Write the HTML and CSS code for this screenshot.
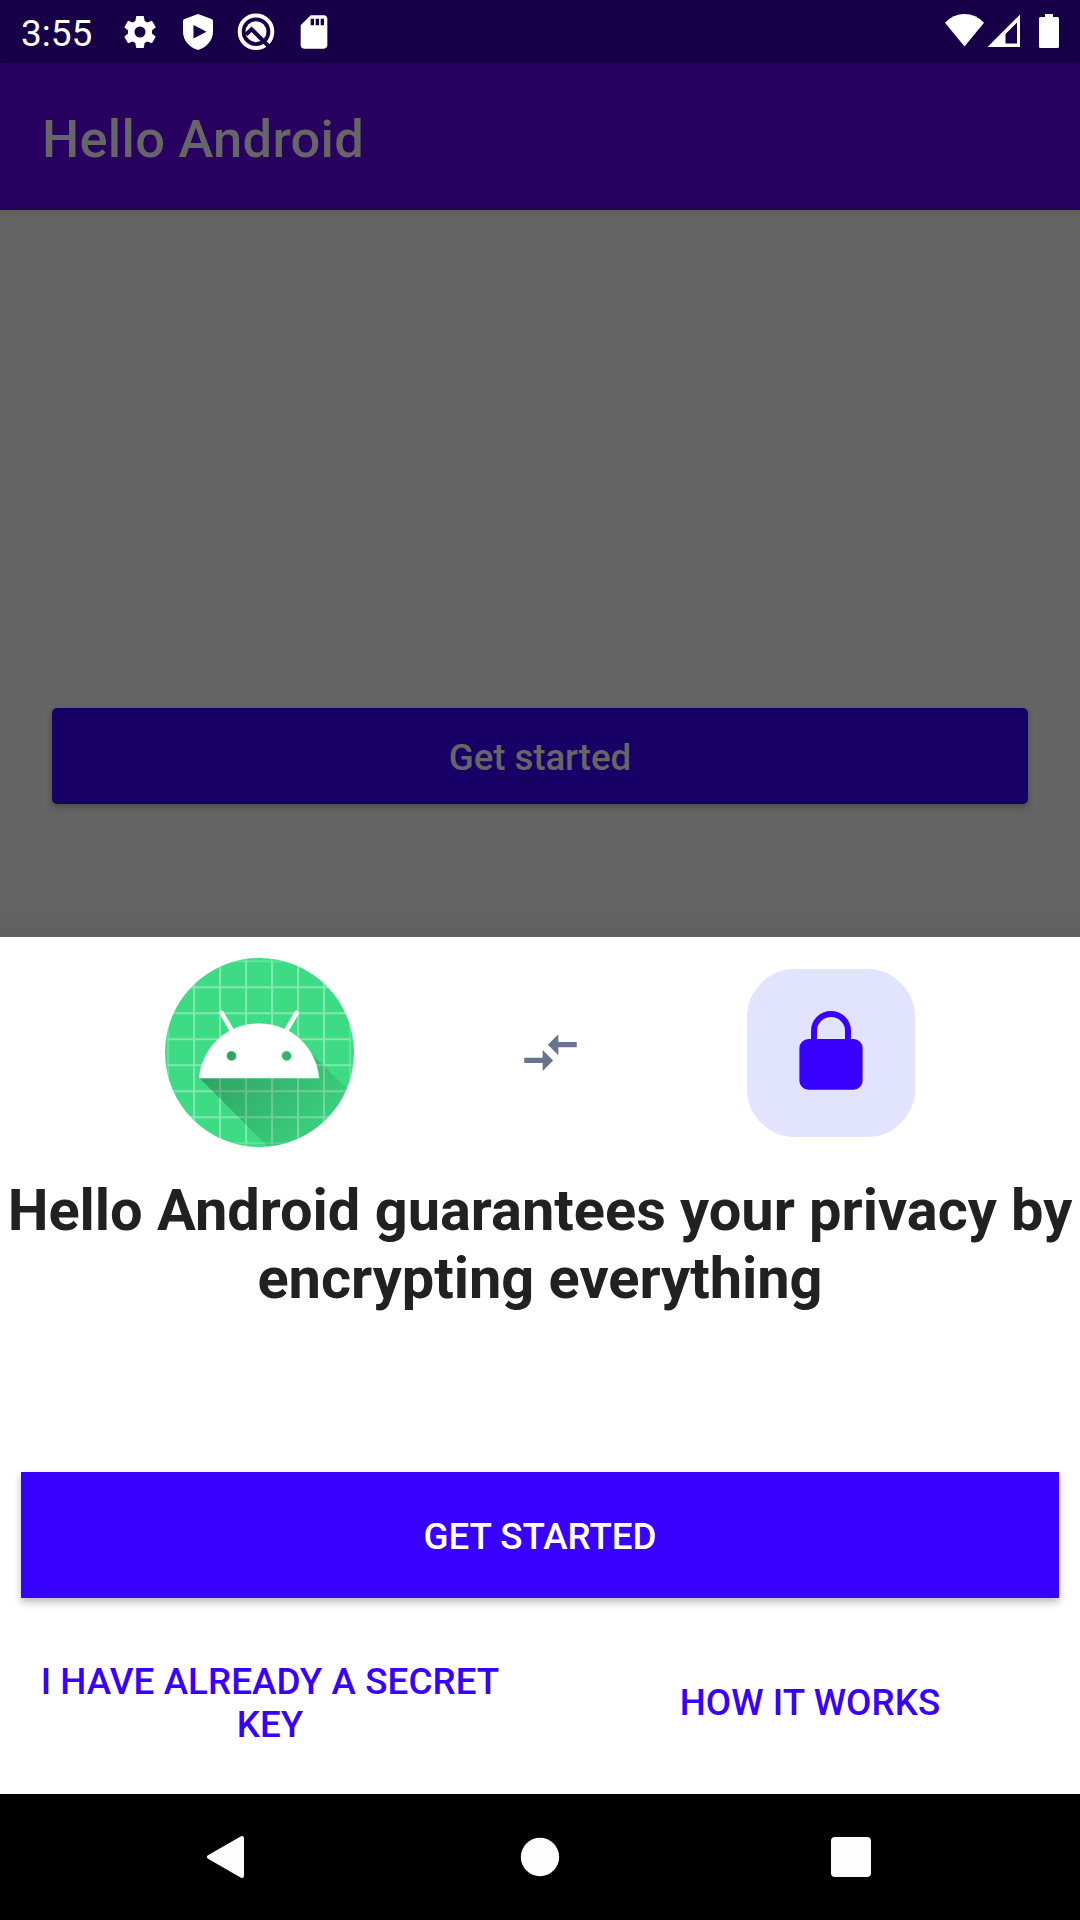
FILE: index.html
```html
<!DOCTYPE html>
<html lang="en">
<head>
<meta charset="utf-8">
<title>Hello Android</title>
<link rel="stylesheet" href="styles.css">
</head>
<body>
<div class="screen">
  <header class="status">
    <span class="time">3:55</span>
    <div class="notifications">
      <svg width="40" height="40" viewBox="0 0 24 24"><path d="M19.14 12.94c.04-.3.06-.61.06-.94 0-.32-.02-.64-.07-.94l2.03-1.58c.18-.14.23-.41.12-.61l-1.92-3.32c-.12-.22-.37-.29-.59-.22l-2.39.96c-.5-.38-1.03-.7-1.62-.94L14.4 2.81c-.04-.24-.24-.41-.48-.41h-3.84c-.24 0-.43.17-.47.41l-.36 2.54c-.59.24-1.13.57-1.62.94l-2.39-.96c-.22-.08-.47 0-.59.22L2.74 8.87c-.12.21-.08.47.12.61l2.03 1.58c-.05.3-.09.63-.09.94s.02.64.07.94l-2.03 1.58c-.18.14-.23.41-.12.61l1.92 3.32c.12.22.37.29.59.22l2.39-.96c.5.38 1.03.7 1.62.94l.36 2.54c.05.24.24.41.48.41h3.84c.24 0 .44-.17.47-.41l.36-2.54c.59-.24 1.13-.56 1.62-.94l2.39.96c.22.08.47 0 .59-.22l1.92-3.32c.12-.22.07-.47-.12-.61l-2.01-1.58zM12 15.3a3.3 3.3 0 1 1 0-6.6 3.3 3.3 0 0 1 0 6.6z"/></svg>
      <svg width="40" height="40" viewBox="0 0 40 40"><path fill-rule="evenodd" d="M20 2 33.500 7Q35 7.600 35 9V19.500C35 28 29 35.500 20 38 11 35.500 5 28 5 19.500V9Q5 7.600 6.500 7ZM15.500 13V26.500L28.500 19.700Z"/></svg>
      <svg width="40" height="40" viewBox="0 0 40 40"><circle class="ring" cx="20" cy="19.700" r="16.300"/><circle cx="20" cy="19.700" r="10.500"/><path class="cut" d="M10 22.500 15.500 17.200 33 34.500"/></svg>
      <svg width="40" height="40" viewBox="0 0 24 24"><path d="M18 2h-8L4.020 8 4 20c0 1.100.9 2 2 2h12c1.100 0 2-.9 2-2V4c0-1.100-.9-2-2-2zm-6 6h-2V4h2v4zm3 0h-2V4h2v4zm3 0h-2V4h2v4z"/></svg>
    </div>
    <svg class="system" width="116" height="40" viewBox="944 12 116 40"><path d="M964.500 46.500 945 22.800Q953 14 964.500 14T984 22.800Z"/><path fill-rule="evenodd" d="M1020 14.500V47H987.500ZM1017 22.500 1005.500 34V43.500H1017Z"/><path d="M1045 14h8v3h4.500q1.500 0 1.500 1.500v28q0 1.500-1.500 1.500h-17q-1.500 0-1.500-1.500v-28q0-1.500 1.500-1.500h4.500z"/></svg>
  </header>
  <div class="appbar">Hello Android</div>
  <main class="content"><div class="start">Get started</div></main>
  <section class="sheet">
    <div class="icons">
      <svg class="launcher" width="189" height="189" viewBox="17.800 17.750 72.700 72.700">
        <defs>
          <clipPath id="disc"><circle cx="54.150" cy="54.100" r="36.350"/></clipPath>
          <linearGradient id="shade" gradientUnits="userSpaceOnUse" x1="42.949" y1="49.598" x2="85.848" y2="92.496"><stop offset="0" stop-color="#000" stop-opacity=".267"/><stop offset="1" stop-color="#000" stop-opacity="0"/></linearGradient>
        </defs>
        <g clip-path="url(#disc)">
          <path fill="#3ddc84" d="M0 0h108v108H0z"/>
          <path class="grid" d="M19 0v108M29 0v108M39 0v108M49 0v108M59 0v108M69 0v108M79 0v108M89 0v108M0 19h108M0 29h108M0 39h108M0 49h108M0 59h108M0 69h108M0 79h108M0 89h108"/>
          <path class="grid" d="M29 19v70M39 19v70M49 19v70M59 19v70M69 19v70M79 19v70M19 29h70M19 39h70M19 49h70M19 59h70M19 69h70M19 79h70"/>
          <path fill="url(#shade)" d="M31 63.928s6.400-11 12.100-13.100c7.200-2.600 26-1.400 26-1.400l38.100 38.100-.2 21.400-32-1z"/>
          <path fill="#fff" stroke="#fff" stroke-width=".2" d="M65.300 45.828l3.800-6.600c.2-.4.1-.9-.3-1.100-.4-.2-.9-.1-1.100.3l-3.900 6.700c-6.300-2.800-13.400-2.800-19.700 0l-3.900-6.700c-.2-.4-.7-.5-1.100-.3-.3.200-.4.700-.2 1.100l3.800 6.600C36.200 49.428 31.700 56.028 31 63.928h46c-.7-7.900-5.200-14.500-11.700-18.100zM43.400 57.328c-.8 0-1.500-.5-1.800-1.200-.3-.7-.1-1.500.4-2.100.5-.5 1.400-.7 2.100-.4.700.3 1.200 1 1.200 1.800 0 1.100-.8 1.900-1.900 1.900zM64.600 57.328c-.8 0-1.500-.5-1.800-1.200s-.1-1.500.4-2.100c.5-.5 1.400-.7 2.100-.4.7.3 1.200 1 1.200 1.800 0 1.100-.9 1.900-1.900 1.900z"/>
        </g>
      </svg>
      <svg class="arrows" width="63" height="63" viewBox="0 0 24 24"><path d="M9.010 14H2v2h7.010v3L13 15l-3.990-4v3zm5.980-1v-3H22V8h-7.010V5L11 9l3.990 4z"/></svg>
      <svg class="lock" width="168" height="168" viewBox="0 0 168 168"><path fill="#e1e3ff" d="M47 0H121C146 0 168 22 168 47V121C168 146 146 168 121 168H47C22 168 0 146 0 121V47C0 22 22 0 47 0Z"/><rect x="52.400" y="70" width="63.200" height="50.700" rx="9" fill="#3700ff"/><path fill="none" stroke="#3700ff" stroke-width="6" d="M67 72V62a17 17 0 0 1 34 0V72"/></svg>
    </div>
    <h1>Hello Android guarantees your privacy by encrypting everything</h1>
    <div class="primary">GET STARTED</div>
    <div class="links"><span>I HAVE ALREADY A SECRET KEY</span><span>HOW IT WORKS</span></div>
  </section>
  <nav class="navbar">
    <svg width="44" height="44" viewBox="0 0 44 44"><path stroke="#fdfdfd" stroke-width="4" stroke-linejoin="round" d="M35 3V41L2 22Z"/></svg>
    <svg width="44" height="44" viewBox="0 0 44 44"><circle cx="22" cy="22" r="19.200"/></svg>
    <svg width="44" height="44" viewBox="0 0 44 44"><rect x="2" y="2" width="40" height="40" rx="4"/></svg>
  </nav>
</div>
</body>
</html>
```
FILE: styles.css
```css
* { box-sizing: border-box; }
body { margin: 0; font-family: Roboto, sans-serif; }
svg { display: block; flex: none; }
.screen { width: 1080px; height: 1920px; display: flex; flex-direction: column; overflow: hidden; background: #666; }
.status { height: 63px; flex: none; display: flex; align-items: flex-start; padding: 12px 20px 0 21px; background: #170048; color: #fff; }
.status svg { fill: #fff; }
.time { width: 99px; font-size: 37px; line-height: 44px; }
.notifications { display: flex; gap: 18px; }
.ring { fill: none; stroke: #fff; stroke-width: 4; }
.cut { fill: none; stroke: #170048; stroke-width: 4; }
.system { margin-left: auto; }
.appbar { height: 147px; flex: none; padding: 45px 42px 0; background: #270060; color: #666; font-size: 52.5px; line-height: 62px; font-weight: 500; letter-spacing: .25px; z-index: 1; box-shadow: 0 1px 6px rgba(0,0,0,.15); }
.content { height: 727px; flex: none; padding: 498px 52px 0; background: linear-gradient(#646464 96%, #5f5f5f); }
.start { height: 96px; border-radius: 5px; background: #160066; color: #666; font-size: 36.75px; line-height: 100px; font-weight: 500; letter-spacing: -.12px; text-align: center; box-shadow: 0 3px 6px rgba(0,0,0,.25); }
.sheet { height: 857px; flex: none; background: #fff; padding-top: 21px; }
.icons { height: 189px; display: flex; align-items: center; padding: 0 165px; justify-content: space-between; }
.grid { fill: none; stroke: #fff; stroke-opacity: .2; stroke-width: .8; }
.arrows { fill: #677489; }
h1 { margin: 29px 0 0; color: #212121; font-size: 57.75px; line-height: 68px; font-weight: 700; letter-spacing: -.02px; text-align: center; }
.primary { height: 126px; margin: 160px 21px 0; background: #3700ff; color: #fff; font-size: 36.75px; line-height: 129px; font-weight: 500; text-align: center; box-shadow: 0 4px 8px rgba(0,0,0,.27); }
.links { height: 196px; padding: 13px 0 0; display: grid; grid-template-columns: 1fr 1fr; align-items: center; color: #3700ff; font-size: 36.75px; line-height: 43px; font-weight: 500; letter-spacing: .08px; text-align: center; }
.links span { padding: 0 32px; }
.navbar { height: 126px; flex: none; background: #000; display: flex; justify-content: space-between; align-items: center; padding: 0 207px; }
.navbar svg { fill: #fdfdfd; }
```
